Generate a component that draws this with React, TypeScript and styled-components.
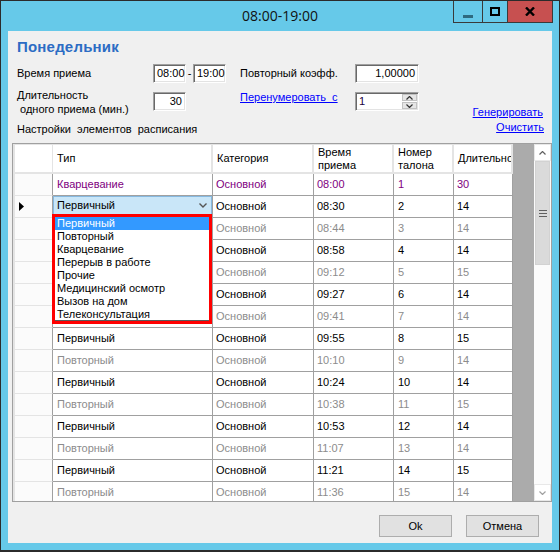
import React from 'react';
import styled, { createGlobalStyle } from 'styled-components';

const GlobalStyle = createGlobalStyle`
  html, body { margin: 0; padding: 0; background: #ffffff; }
  body { font-family: "Liberation Sans", Arial, sans-serif; font-size: 11px; color: #000; }
  * { box-sizing: border-box; }
`;

const Window = styled.div`
  width: 560px;
  height: 552px;
  background: #66c9e9;
  border: 1px solid #2b2b2b;
  border-bottom-width: 2px;
  display: flex;
  flex-direction: column;
  overflow: hidden;
`;

const TitleBar = styled.div`
  height: 30px;
  flex-shrink: 0;
  display: grid;
  grid-template-columns: 1fr auto 1fr;
  align-items: center;
`;

const TitleText = styled.div`
  grid-column: 2;
  font-family: "Open Sans", "Noto Sans", sans-serif;
  font-size: 14px;
  color: #111;
  line-height: 18px;
`;

const TitleButtons = styled.div`
  grid-column: 3;
  justify-self: end;
  align-self: start;
  margin-right: 6px;
  display: flex;
  height: 22px;
  border: 1px solid #3a3a3a;
  border-top: none;
`;

const TitleButton = styled.div<{ $w: number; $close?: boolean }>`
  width: ${p => p.$w}px;
  height: 100%;
  display: flex;
  align-items: center;
  justify-content: center;
  background: ${p => (p.$close ? '#c75050' : 'transparent')};
  & + & { border-left: 1px solid #3a3a3a; }
`;

const Client = styled.div`
  margin: 0 7px;
  height: 512px;
  background: #f0f0f0;
  display: flex;
  flex-direction: column;
`;

const Heading = styled.div`
  margin: 7px 0 0 9px;
  font: bold 15px/18px "Liberation Sans", Arial, sans-serif;
  letter-spacing: 0.2px;
  color: #2c6cc4;
`;

const FormRow = styled.div<{ $mt: number; $align?: string; $pr?: number }>`
  display: flex;
  align-items: ${p => p.$align ?? 'center'};
  margin-top: ${p => p.$mt}px;
  padding: 0 ${p => p.$pr ?? 9}px 0 9px;
`;

const Label = styled.div<{ $w?: number; $ml?: number; $mt?: number; $lh?: number }>`
  ${p => (p.$w ? `width: ${p.$w}px;` : '')}
  margin-left: ${p => p.$ml ?? 0}px;
  margin-top: ${p => p.$mt ?? 0}px;
  line-height: ${p => p.$lh ?? 13}px;
  white-space: pre;
  flex-shrink: 0;
`;

const Link = styled.span<{ $w?: number; $ml?: number; $mt?: number }>`
  ${p => (p.$w ? `width: ${p.$w}px;` : '')}
  margin-left: ${p => p.$ml ?? 0}px;
  margin-top: ${p => p.$mt ?? 0}px;
  line-height: 13px;
  color: #0000ff;
  text-decoration: underline;
  white-space: pre;
  flex-shrink: 0;
`;

const RightLink = styled(Link)`
  margin-left: auto;
`;

const Sunken = styled.div<{ $w: number; $align?: string; $mt?: number }>`
  width: ${p => p.$w}px;
  height: 19px;
  margin-top: ${p => p.$mt ?? 0}px;
  flex-shrink: 0;
  background: #fff;
  border-style: solid;
  border-width: 1px;
  border-color: #a0a0a0 #ffffff #ffffff #a0a0a0;
  box-shadow: inset 1px 1px 0 #696969, inset -1px -1px 0 #e3e3e3;
  padding: 0 3px 0 3px;
  line-height: 17px;
  text-align: ${p => p.$align ?? 'left'};
`;

const Dash = styled.div`
  width: 7px;
  text-align: center;
  line-height: 13px;
`;

const Spin = styled.div<{ $mt?: number }>`
  width: 64px;
  height: 19px;
  margin-top: ${p => p.$mt ?? 0}px;
  display: flex;
  background: #fff;
  border-style: solid;
  border-width: 1px;
  border-color: #a0a0a0 #ffffff #ffffff #a0a0a0;
  box-shadow: inset 1px 1px 0 #696969, inset -1px -1px 0 #e3e3e3;
`;

const SpinText = styled.div`
  flex: 1;
  padding: 0 3px;
  line-height: 17px;
  color: #200040;
`;

const SpinButtons = styled.div`
  width: 16px;
  display: flex;
  flex-direction: column;
  padding: 1px 1px 1px 0;
  gap: 1px;
`;

const SpinButton = styled.div`
  flex: 1;
  background: #e6e6e6;
  border: 1px solid #c2c2c2;
  display: flex;
  align-items: center;
  justify-content: center;
`;

const GridFrame = styled.div`
  position: relative;
  margin: 7px 0 0 4px;
  height: 359px;
  flex-shrink: 0;
  display: flex;
  border: 1px solid #a0a0a0;
  background: #ababab;
`;

const TableArea = styled.div`
  flex: 1;
  display: flex;
  flex-direction: column;
  overflow: hidden;
`;

const HeaderRow = styled.div`
  display: flex;
  height: 30px;
  flex-shrink: 0;
`;

const DataRow = styled.div`
  display: flex;
  height: 22px;
  flex-shrink: 0;
`;

const RowHeaderCell = styled.div<{ $head?: boolean }>`
  width: 40px;
  flex-shrink: 0;
  background: ${p => (p.$head ? '#ffffff' : '#fbfbfb')};
  border-left: 2px solid #e4e4e4;
  border-right: 1px solid ${p => (p.$head ? '#e4e4e4' : '#a0a0a0')};
  border-bottom: ${p => (p.$head ? '2px' : '1px')} solid #e4e4e4;
  border-top: ${p => (p.$head ? '1px solid #e4e4e4' : 'none')};
  display: flex;
  align-items: center;
  padding-left: 2px;
`;

const HeadCell = styled.div<{ $w: number }>`
  width: ${p => p.$w}px;
  flex-shrink: 0;
  background: #fff;
  border-top: 1px solid #e4e4e4;
  border-right: 2px solid #e4e4e4;
  border-bottom: 2px solid #e4e4e4;
  padding-left: 4px;
  display: flex;
  align-items: center;
  line-height: 13px;
  white-space: pre;
  overflow: hidden;
`;

type Kind = 'q' | 'p' | 'r';
const kindColor: Record<Kind, string> = { q: '#800080', p: '#000000', r: '#8c8c8c' };

const Cell = styled.div<{ $w: number; $kind: Kind; $pl?: number }>`
  width: ${p => p.$w}px;
  flex-shrink: 0;
  background: #fff;
  border-right: 1px solid #a0a0a0;
  border-bottom: 1px solid #a0a0a0;
  padding-left: ${p => p.$pl ?? 3}px;
  line-height: 21px;
  white-space: nowrap;
  overflow: hidden;
  color: ${p => kindColor[p.$kind]};
`;

const EditCell = styled.div<{ $w: number }>`
  width: ${p => p.$w}px;
  flex-shrink: 0;
  background: #fff;
  border-right: 1px solid #a0a0a0;
  border-bottom: 1px solid #a0a0a0;
`;

const Combo = styled.div`
  height: 19px;
  background: #c9e6f8;
  border: 1px solid #86b9e0;
  display: flex;
  align-items: center;
  justify-content: space-between;
  padding: 0 4px 0 3px;
  line-height: 17px;
`;

const DropList = styled.div`
  position: absolute;
  left: 39px;
  top: 70px;
  width: 160px;
  height: 110px;
  border: 3px solid #ff0000;
  background: #fff;
  box-shadow: inset 0 -1px 0 #5a5a5a;
  z-index: 2;
`;

const DropItem = styled.div<{ $sel?: boolean }>`
  height: 13px;
  line-height: 13px;
  padding-left: 2px;
  white-space: nowrap;
  background: ${p => (p.$sel ? '#3399ff' : 'transparent')};
  color: ${p => (p.$sel ? '#ffffff' : '#000000')};
`;

const ScrollBar = styled.div`
  width: 17px;
  flex-shrink: 0;
  display: flex;
  flex-direction: column;
  background: #fbfbfb;
`;

const ScrollArrow = styled.div`
  height: 17px;
  flex-shrink: 0;
  background: #ffffff;
  border: 1px solid #e8e8e8;
  display: flex;
  align-items: center;
  justify-content: center;
`;

const Thumb = styled.div`
  height: 104px;
  flex-shrink: 0;
  margin: 0 1px;
  background: #dadada;
  border: 1px solid #d2d2d2;
  display: flex;
  align-items: center;
  justify-content: center;
`;

const Track = styled.div`
  flex: 1;
`;

const Footer = styled.div`
  display: flex;
  justify-content: flex-end;
  gap: 14px;
  margin-top: 13px;
  padding-right: 13px;
`;

const Button = styled.div`
  width: 73px;
  height: 22px;
  background: #e1e1e1;
  border: 1px solid #adadad;
  text-align: center;
  line-height: 20px;
`;

const Chevron = ({ up, color }: { up?: boolean; color: string }) => (
  <svg width="7" height="4" viewBox="0 0 7 4">
    <polyline
      points={up ? '0.5,3.5 3.5,0.5 6.5,3.5' : '0.5,0.5 3.5,3.5 6.5,0.5'}
      fill="none"
      stroke={color}
      strokeWidth="1.2"
    />
  </svg>
);

const cols = [160, 101, 80, 60, 59];

const rows: { type: string; time: string; n: number; d: number; kind: Kind }[] = [
  { type: 'Кварцевание', time: '08:00', n: 1, d: 30, kind: 'q' },
  { type: 'Первичный', time: '08:30', n: 2, d: 14, kind: 'p' },
  { type: 'Повторный', time: '08:44', n: 3, d: 14, kind: 'r' },
  { type: 'Первичный', time: '08:58', n: 4, d: 14, kind: 'p' },
  { type: 'Повторный', time: '09:12', n: 5, d: 15, kind: 'r' },
  { type: 'Первичный', time: '09:27', n: 6, d: 14, kind: 'p' },
  { type: 'Повторный', time: '09:41', n: 7, d: 14, kind: 'r' },
  { type: 'Первичный', time: '09:55', n: 8, d: 15, kind: 'p' },
  { type: 'Повторный', time: '10:10', n: 9, d: 14, kind: 'r' },
  { type: 'Первичный', time: '10:24', n: 10, d: 14, kind: 'p' },
  { type: 'Повторный', time: '10:38', n: 11, d: 15, kind: 'r' },
  { type: 'Первичный', time: '10:53', n: 12, d: 14, kind: 'p' },
  { type: 'Повторный', time: '11:07', n: 13, d: 14, kind: 'r' },
  { type: 'Первичный', time: '11:21', n: 14, d: 15, kind: 'p' },
  { type: 'Повторный', time: '11:36', n: 15, d: 14, kind: 'r' },
];

const options = [
  'Первичный',
  'Повторный',
  'Кварцевание',
  'Перерыв в работе',
  'Прочие',
  'Медицинский осмотр',
  'Вызов на дом',
  'Телеконсультация',
];

// rows whose "Тип" cell lies under the open drop-down list
const coveredByList = (i: number) => i >= 2 && i <= 6;

export default function App() {
  return (
    <>
      <GlobalStyle />
      <Window>
        <TitleBar>
          <TitleText>08:00-19:00</TitleText>
          <TitleButtons>
            <TitleButton $w={28}>
              <svg width="10" height="12" viewBox="0 0 10 12">
                <rect x="0" y="9" width="10" height="3" fill="#2e6a80" />
              </svg>
            </TitleButton>
            <TitleButton $w={25}>
              <svg width="10" height="9" viewBox="0 0 10 9">
                <rect x="1" y="1" width="8" height="7" fill="none" stroke="#000" strokeWidth="2" />
              </svg>
            </TitleButton>
            <TitleButton $w={45} $close>
              <svg width="10" height="9" viewBox="0 0 10 9">
                <path d="M1 0.5 L9 8.5 M9 0.5 L1 8.5" stroke="#000" strokeWidth="2.4" />
              </svg>
            </TitleButton>
          </TitleButtons>
        </TitleBar>
        <Client>
          <Heading>Понедельник</Heading>
          <FormRow $mt={8}>
            <Label $w={136}>Время приема</Label>
            <Sunken $w={33}>08:00</Sunken>
            <Dash>-</Dash>
            <Sunken $w={33}>19:00</Sunken>
            <Label $w={115} $ml={14}>Повторный коэфф.</Label>
            <Sunken $w={64} $align="right">1,00000</Sunken>
          </FormRow>
          <FormRow $mt={5} $align="flex-start">
            <Label $w={136} $lh={14}>{'Длительность\n одного приема (мин.)'}</Label>
            <Sunken $w={33} $align="right" $mt={4}>30</Sunken>
            <Link $w={115} $ml={54} $mt={3}>{'Перенумеровать  с'}</Link>
            <Spin $mt={4}>
              <SpinText>1</SpinText>
              <SpinButtons>
                <SpinButton><Chevron up color="#333" /></SpinButton>
                <SpinButton><Chevron color="#333" /></SpinButton>
              </SpinButtons>
            </Spin>
            <RightLink $mt={18}>Генерировать</RightLink>
          </FormRow>
          <FormRow $mt={2} $align="flex-start" $pr={8}>
            <Label $mt={2}>{'Настройки  элементов  расписания'}</Label>
            <RightLink>Очистить</RightLink>
          </FormRow>
          <GridFrame>
            <TableArea>
              <HeaderRow>
                <RowHeaderCell $head />
                <HeadCell $w={cols[0]}>Тип</HeadCell>
                <HeadCell $w={cols[1]}>Категория</HeadCell>
                <HeadCell $w={cols[2]}>{'Время\nприема'}</HeadCell>
                <HeadCell $w={cols[3]}>{'Номер\nталона'}</HeadCell>
                <HeadCell $w={cols[4]}>Длительно</HeadCell>
              </HeaderRow>
              {rows.map((r, i) => (
                <DataRow key={i}>
                  <RowHeaderCell>
                    {i === 1 && (
                      <svg width="6" height="9" viewBox="0 0 6 9" style={{ marginLeft: 2 }}>
                        <path d="M0 0 L5 4.5 L0 9 Z" fill="#000" />
                      </svg>
                    )}
                  </RowHeaderCell>
                  {i === 1 ? (
                    <EditCell $w={cols[0]}>
                      <Combo>
                        <span>{r.type}</span>
                        <svg width="8" height="5" viewBox="0 0 8 5">
                          <polyline points="0.5,0.5 4,4 7.5,0.5" fill="none" stroke="#555" strokeWidth="1.4" />
                        </svg>
                      </Combo>
                    </EditCell>
                  ) : (
                    <Cell $w={cols[0]} $kind={r.kind} $pl={4}>
                      {coveredByList(i) ? '' : r.type}
                    </Cell>
                  )}
                  <Cell $w={cols[1]} $kind={r.kind}>Основной</Cell>
                  <Cell $w={cols[2]} $kind={r.kind}>{r.time}</Cell>
                  <Cell $w={cols[3]} $kind={r.kind} $pl={4}>{r.n}</Cell>
                  <Cell $w={cols[4]} $kind={r.kind}>{r.d}</Cell>
                </DataRow>
              ))}
            </TableArea>
            <ScrollBar>
              <ScrollArrow><Chevron up color="#606060" /></ScrollArrow>
              <Thumb>
                <svg width="8" height="7" viewBox="0 0 8 7">
                  <rect x="0" y="0" width="8" height="1" fill="#606060" />
                  <rect x="0" y="3" width="8" height="1" fill="#606060" />
                  <rect x="0" y="6" width="8" height="1" fill="#606060" />
                </svg>
              </Thumb>
              <Track />
              <ScrollArrow><Chevron color="#a0a0a0" /></ScrollArrow>
            </ScrollBar>
            <DropList>
              {options.map((o, i) => (
                <DropItem key={o} $sel={i === 0}>{o}</DropItem>
              ))}
            </DropList>
          </GridFrame>
          <Footer>
            <Button>Ok</Button>
            <Button>Отмена</Button>
          </Footer>
        </Client>
      </Window>
    </>
  );
}
